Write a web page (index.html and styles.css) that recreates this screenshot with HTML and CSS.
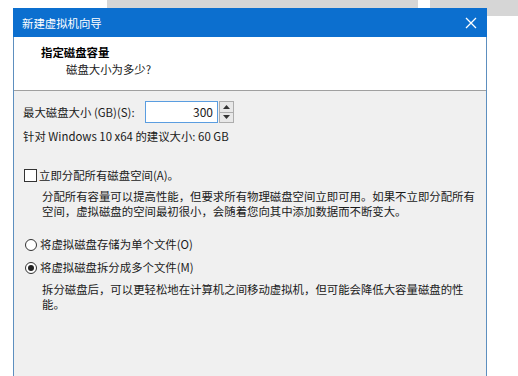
FILE: index.html
```html
<!DOCTYPE html>
<html lang="zh-CN">
<head>
<meta charset="utf-8">
<title>新建虚拟机向导</title>
<link rel="stylesheet" href="styles.css">
</head>
<body>
<div class="backdrop">
  <div class="tab tab1"></div>
  <div class="tab tab2"></div>
</div>
<div class="window">
  <div class="titlebar">
    <span class="title">新建虚拟机向导</span>
    <svg class="close" width="12" height="12" viewBox="0 0 12 12"><path d="M1 1L11 11M11 1L1 11" stroke="#fff" stroke-width="1.3" fill="none"/></svg>
  </div>
  <div class="header">
    <div class="h-title">指定磁盘容量</div>
    <div class="h-sub">磁盘大小为多少?</div>
  </div>
  <div class="body">
    <div class="size-row">
      <span class="size-label">最大磁盘大小 (GB)(S):</span>
      <div class="spin">
        <div class="spin-input">300</div>
        <div class="spin-btns">
          <div class="spin-btn"><svg width="7" height="4" viewBox="0 0 7 4"><path d="M3.5 0L7 4H0Z" fill="#333"/></svg></div>
          <div class="spin-btn"><svg width="7" height="4" viewBox="0 0 7 4"><path d="M0 0H7L3.5 4Z" fill="#333"/></svg></div>
        </div>
      </div>
    </div>
    <div class="hint">针对 Windows 10 x64 的建议大小: 60 GB</div>
    <div class="option check-option"><span class="checkbox"></span><span>立即分配所有磁盘空间(A)。</span></div>
    <p class="desc desc1">分配所有容量可以提高性能，但要求所有物理磁盘空间立即可用。如果不立即分配所有<br>空间，虚拟磁盘的空间最初很小，会随着您向其中添加数据而不断变大。</p>
    <div class="option radio-option first-radio"><span class="radio"></span><span>将虚拟磁盘存储为单个文件(O)</span></div>
    <div class="option radio-option second-radio"><span class="radio checked"></span><span>将虚拟磁盘拆分成多个文件(M)</span></div>
    <p class="desc desc2">拆分磁盘后，可以更轻松地在计算机之间移动虚拟机，但可能会降低大容量磁盘的性<br>能。</p>
  </div>
</div>
</body>
</html>
```
FILE: styles.css
```css
html, body {
  margin: 0;
  padding: 0;
  background: #ffffff;
  width: 518px;
  height: 376px;
  overflow: hidden;
  font-family: "Noto Sans CJK SC", "Noto Sans", sans-serif;
  font-size: 11.4px;
  color: #1a1a1a;
}
.backdrop {
  position: relative;
  height: 0;
}
.tab {
  position: absolute;
  top: 0;
  background: #d6d6d6;
}
.tab1 { left: 107px; width: 311px; height: 9px; }
.tab2 { left: 430px; width: 88px; height: 16px; }

.window {
  position: relative;
  margin: 8px 0 0 13px;
  width: 472px;
  height: 400px;
  border-left: 1px solid #5d8fbf;
  border-right: 1px solid #5d8fbf;
  display: flex;
  flex-direction: column;
  background: #f0f0f0;
}
.titlebar {
  height: 29px;
  background: #0c6fcf;
  display: flex;
  align-items: center;
  justify-content: space-between;
  padding: 0 10px 0 8px;
  margin: 0 -1px 0 -1px;
  color: #fff;
}
.title {
  line-height: 14px;
  padding-left: 1px;
}
.close { display: block; }
.header {
  height: 54px;
  background: #fff;
  border-bottom: 1px solid #a0a0a0;
  padding: 7px 0 0 27px;
  box-sizing: border-box;
}
.h-title {
  font-weight: bold;
  line-height: 16px;
  color: #000;
}
.h-sub {
  padding-left: 25px;
  line-height: 16px;
  margin-top: 1px;
}
.body {
  flex: 1;
  padding: 10px 0 0 9px;
}
.size-row {
  display: flex;
  align-items: center;
  height: 22px;
}
.size-label {
  flex: none;
  width: 122px;
  line-height: 15px;
  white-space: nowrap;
}
.spin {
  flex: none;
  display: flex;
  height: 22px;
}
.spin-input {
  width: 67px;
  height: 20px;
  border: 1px solid #5a9de0;
  background: #fff;
  text-align: right;
  line-height: 20px;
  padding-right: 4px;
  font-size: 12px;
}
.spin-btns {
  width: 15px;
  display: flex;
  flex-direction: column;
  margin-left: 1px;
  border: 1px solid #adadad;
  box-sizing: border-box;
  background: #e8e8e8;
}
.spin-btn {
  flex: 1;
  display: flex;
  align-items: center;
  justify-content: center;
}
.spin-btn + .spin-btn { border-top: 1px solid #adadad; }
.hint {
  margin-top: 6px;
  line-height: 15px;
}
.option {
  display: flex;
  align-items: center;
  line-height: 15px;
}
.check-option { margin-top: 24px; }
.checkbox {
  width: 11px;
  height: 11px;
  border: 1px solid #333;
  background: #fff;
  margin: 0 2px 0 1px;
}
.radio {
  width: 10px;
  height: 10px;
  border: 1px solid #333;
  border-radius: 50%;
  background: #fff;
  margin: 0 3px 0 2px;
  display: flex;
  align-items: center;
  justify-content: center;
}
.radio.checked::after {
  content: "";
  width: 6px;
  height: 6px;
  border-radius: 50%;
  background: #222;
}
.desc {
  margin: 0;
  padding-left: 19px;
  line-height: 15px;
  white-space: nowrap;
}
.desc1 { margin-top: 6px; }
.first-radio { margin-top: 18px; }
.second-radio { margin-top: 8px; }
.desc2 { margin-top: 7px; }
```
